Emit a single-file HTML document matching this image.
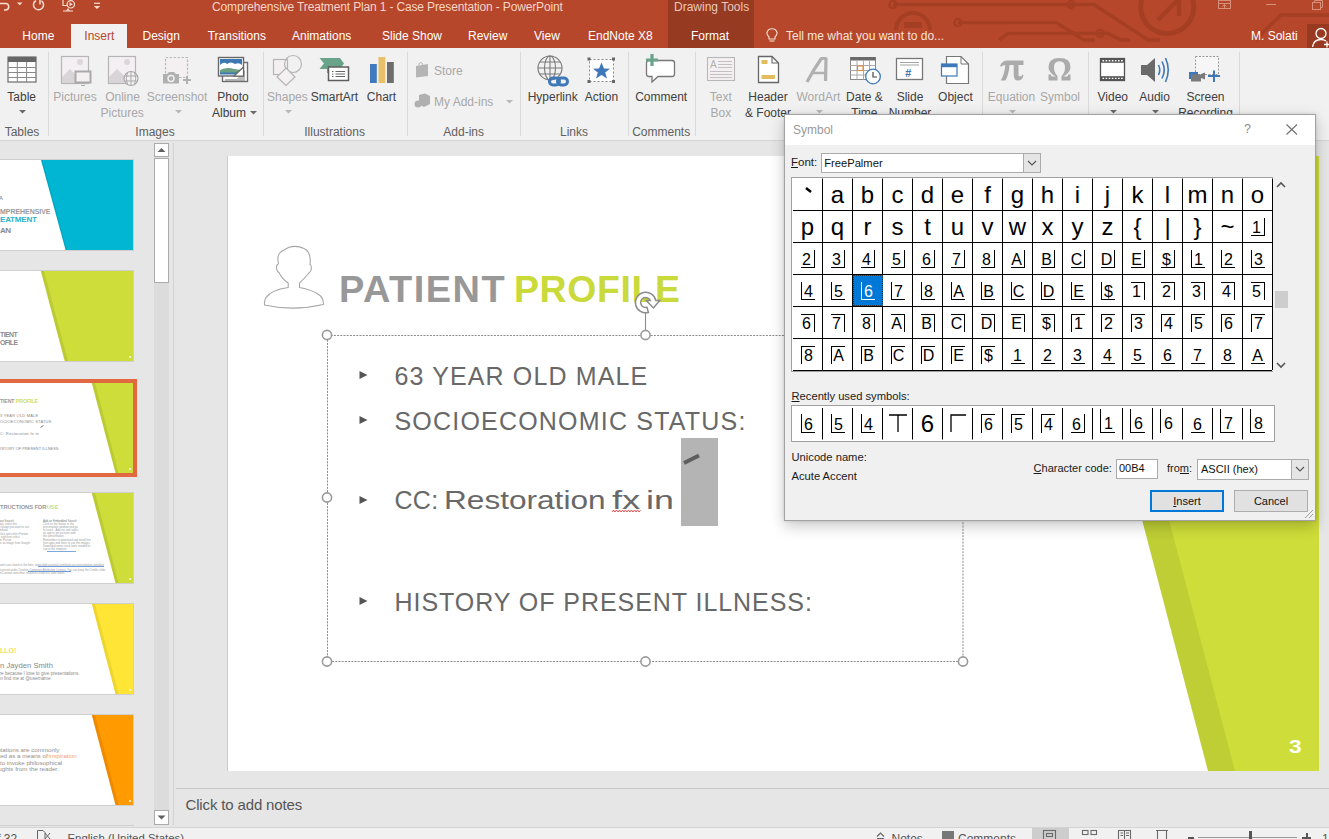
<!DOCTYPE html>
<html><head><meta charset="utf-8">
<style>
*{margin:0;padding:0;box-sizing:border-box}
html,body{width:1329px;height:839px;overflow:hidden;background:#E6E6E6;font-family:"Liberation Sans",sans-serif;position:relative}
.a{position:absolute;display:block}
.t{position:absolute;white-space:nowrap;line-height:1}
u{text-decoration:underline;text-underline-offset:1px}
</style></head><body>
<div class="a" style="left:0px;top:0px;width:1329px;height:48px;background:#B7472A;"></div>
<svg class="a" style="left:860px;top:0px;" width="469" height="48" viewBox="0 0 469 48">
<g fill="none" stroke="#A53F24" stroke-width="3.4" stroke-linejoin="round">
<path d="M33 4.5 H234 L288 40 H300"/>
<circle cx="33" cy="4.5" r="3.6" stroke-width="2.3"/>
<circle cx="211" cy="4.5" r="3.6" stroke-width="2.3"/>
<path d="M36 30 A17 17 0 0 1 70 30" stroke-width="4"/>
<path d="M98 22.6 H196.5 L223.6 40 H235"/>
<circle cx="98" cy="22.6" r="3.6" stroke-width="2.3"/>
<path d="M139 40 L148 33.4 H247.7 L261.3 40 H270"/>
<circle cx="240.2" cy="33.4" r="3.6" stroke-width="2.3"/>
<circle cx="307.2" cy="7" r="26.5" stroke-width="5"/>
<path d="M298 20 L318 0 M319 -2 V16" stroke-width="4.5"/>
<path d="M395 40 L421 15 H469"/>
</g>
<rect x="44" y="22" width="18" height="6" fill="#A53F24"/>
</svg>
<div class="a" style="left:668px;top:0px;width:86px;height:48px;background:#963A21;"></div>
<div class="t" style="top:1.14px;font-size:12px;color:#F6D5C8;left:212.00px;letter-spacing:-0.15px">Comprehensive Treatment Plan 1 - Case Presentation - PowerPoint</div>
<div class="t" style="top:1.14px;font-size:12px;color:#EDC7BA;left:674.00px;">Drawing Tools</div>
<svg class="a" style="left:0px;top:0px;" width="110" height="22" viewBox="0 0 110 22">
<g fill="none" stroke="#F7DDD3" stroke-width="1.5">
<path d="M0 3.6 H5.5 A3.2 3.2 0 0 1 5.5 10 H4"/>
<path d="M36 0.5 A5 5 0 1 0 41.5 0.8"/>
<path d="M40 -1 V4.5"/>
<path d="M63 0 V5.5 H67" stroke-width="1.2"/>
<circle cx="70.8" cy="4.3" r="3.7" stroke-width="1.2"/>
<path d="M63 11 H73 M66.5 11 L68 9 L69.5 11" stroke-width="1.1"/>
<path d="M94 3.3 H100" stroke-width="1.2"/>
</g>
<path d="M17 2.5 H22.5 L19.75 5.3Z" fill="#F7DDD3"/>
<path d="M69.5 2.3 L72.8 4.3 L69.5 6.3Z" fill="#F7DDD3"/>
<path d="M93.8 6 H100.2 L97 9Z" fill="#F7DDD3"/>
</svg>
<svg class="a" style="left:1210px;top:0px;" width="119" height="14" viewBox="0 0 119 14">
<g fill="none" stroke="#D9907A" stroke-width="1">
<rect x="8.5" y="0.5" width="12" height="8"/><path d="M8.5 3.5 H20.5 M14.5 8 V5 M12.5 6.5 L14.5 4.5 L16.5 6.5"/>
<path d="M56 4.5 H66"/>
<rect x="102.5" y="2.5" width="8" height="7"/><path d="M104.5 2.5 V0.5 H112.5 V7.5 H110.5"/>
</g></svg>
<div class="a" style="left:71px;top:24px;width:56px;height:24px;background:#F1F1F1;"></div>
<div class="t" style="top:30.44px;font-size:12px;color:#FFFFFF;left:22.30px;">Home</div>
<div class="t" style="top:30.44px;font-size:12px;color:#FFFFFF;left:142.50px;">Design</div>
<div class="t" style="top:30.44px;font-size:12px;color:#FFFFFF;left:207.70px;">Transitions</div>
<div class="t" style="top:30.44px;font-size:12px;color:#FFFFFF;left:292.00px;">Animations</div>
<div class="t" style="top:30.44px;font-size:12px;color:#FFFFFF;left:382.00px;">Slide Show</div>
<div class="t" style="top:30.44px;font-size:12px;color:#FFFFFF;left:468.00px;">Review</div>
<div class="t" style="top:30.44px;font-size:12px;color:#FFFFFF;left:534.00px;">View</div>
<div class="t" style="top:30.44px;font-size:12px;color:#FFFFFF;left:588.00px;">EndNote X8</div>
<div class="t" style="top:30.44px;font-size:12px;color:#FFFFFF;left:691.00px;">Format</div>
<div class="t" style="top:30.44px;font-size:12px;color:#B7472A;left:84.30px;">Insert</div>
<svg class="a" style="left:766px;top:28px;" width="12" height="16" viewBox="0 0 12 16"><g fill="none" stroke="#F7E0D7" stroke-width="1.1"><path d="M3 9 Q0.5 6.5 1 4.5 Q2 0.7 6 0.7 Q10 0.7 11 4.5 Q11.5 6.5 9 9 V11 H3Z"/><path d="M3.5 13 H8.5"/></g></svg>
<div class="t" style="top:30.44px;font-size:12px;color:#F7E3DB;left:786.00px;">Tell me what you want to do...</div>
<div class="t" style="top:30.44px;font-size:12px;color:#FFFFFF;left:1251.00px;">M. Solati</div>
<div class="a" style="left:1307px;top:24px;width:22px;height:24px;background:#973A21;"></div>
<svg class="a" style="left:1307px;top:24px;" width="22" height="24" viewBox="0 0 22 24"><g fill="none" stroke="#fff" stroke-width="1.3"><circle cx="14" cy="9.5" r="5"/><path d="M5.5 23 Q6.5 15.5 14 15.5 Q17 15.5 19 17"/><path d="M17 20.5 H23 M20 17.5 V23.5"/></g></svg>
<div class="a" style="left:0px;top:48px;width:1329px;height:92px;background:#F1F1F1;"></div>
<div class="a" style="left:0px;top:140px;width:1329px;height:1px;background:#D5D5D5;"></div>
<div class="a" style="left:48px;top:52px;width:1px;height:84px;background:#DADADA;"></div>
<div class="a" style="left:263px;top:52px;width:1px;height:84px;background:#DADADA;"></div>
<div class="a" style="left:407px;top:52px;width:1px;height:84px;background:#DADADA;"></div>
<div class="a" style="left:520px;top:52px;width:1px;height:84px;background:#DADADA;"></div>
<div class="a" style="left:628px;top:52px;width:1px;height:84px;background:#DADADA;"></div>
<div class="a" style="left:695px;top:52px;width:1px;height:84px;background:#DADADA;"></div>
<div class="a" style="left:982px;top:52px;width:1px;height:84px;background:#DADADA;"></div>
<div class="a" style="left:1088px;top:52px;width:1px;height:84px;background:#DADADA;"></div>
<div class="a" style="left:1239px;top:52px;width:1px;height:84px;background:#DADADA;"></div>
<div class="t" style="top:90.54px;font-size:12px;color:#404040;left:-378.30px;width:800px;text-align:center;">Table</div>
<svg class="a" style="left:18.5px;top:110px;" width="7" height="4" viewBox="0 0 7 4"><path d="M0 0 H7 L3.5 3.5Z" fill="#6a6a6a"/></svg>
<div class="t" style="top:90.54px;font-size:12px;color:#A8A8A8;left:-325.00px;width:800px;text-align:center;">Pictures</div>
<div class="t" style="top:90.54px;font-size:12px;color:#A8A8A8;left:-277.50px;width:800px;text-align:center;">Online</div>
<div class="t" style="top:107.34px;font-size:12px;color:#A8A8A8;left:-277.80px;width:800px;text-align:center;">Pictures</div>
<div class="t" style="top:90.54px;font-size:12px;color:#A8A8A8;left:-223.00px;width:800px;text-align:center;">Screenshot</div>
<svg class="a" style="left:174.5px;top:110px;" width="7" height="4" viewBox="0 0 7 4"><path d="M0 0 H7 L3.5 3.5Z" fill="#B8B8B8"/></svg>
<div class="t" style="top:90.54px;font-size:12px;color:#404040;left:-167.00px;width:800px;text-align:center;">Photo</div>
<div class="t" style="top:107.34px;font-size:12px;color:#404040;left:-171.00px;width:800px;text-align:center;">Album</div>
<svg class="a" style="left:249.5px;top:111px;" width="7" height="4" viewBox="0 0 7 4"><path d="M0 0 H7 L3.5 3.5Z" fill="#6a6a6a"/></svg>
<div class="t" style="top:90.54px;font-size:12px;color:#A8A8A8;left:-112.60px;width:800px;text-align:center;">Shapes</div>
<svg class="a" style="left:284.5px;top:110px;" width="7" height="4" viewBox="0 0 7 4"><path d="M0 0 H7 L3.5 3.5Z" fill="#B8B8B8"/></svg>
<div class="t" style="top:90.54px;font-size:12px;color:#404040;left:-65.50px;width:800px;text-align:center;">SmartArt</div>
<div class="t" style="top:90.54px;font-size:12px;color:#404040;left:-18.50px;width:800px;text-align:center;">Chart</div>
<div class="t" style="top:65.04px;font-size:12px;color:#A8A8A8;left:434.00px;">Store</div>
<div class="t" style="top:96.14px;font-size:12px;color:#A8A8A8;left:434.00px;">My Add-ins</div>
<svg class="a" style="left:505.5px;top:100px;" width="7" height="4" viewBox="0 0 7 4"><path d="M0 0 H7 L3.5 3.5Z" fill="#B8B8B8"/></svg>
<div class="t" style="top:90.54px;font-size:12px;color:#404040;left:152.70px;width:800px;text-align:center;">Hyperlink</div>
<div class="t" style="top:90.54px;font-size:12px;color:#404040;left:201.40px;width:800px;text-align:center;">Action</div>
<div class="t" style="top:90.54px;font-size:12px;color:#404040;left:261.20px;width:800px;text-align:center;">Comment</div>
<div class="t" style="top:90.54px;font-size:12px;color:#A8A8A8;left:320.80px;width:800px;text-align:center;">Text</div>
<div class="t" style="top:107.34px;font-size:12px;color:#A8A8A8;left:320.80px;width:800px;text-align:center;">Box</div>
<div class="t" style="top:90.54px;font-size:12px;color:#404040;left:368.00px;width:800px;text-align:center;">Header</div>
<div class="t" style="top:107.34px;font-size:12px;color:#404040;left:368.00px;width:800px;text-align:center;">&amp; Footer</div>
<div class="t" style="top:90.54px;font-size:12px;color:#A8A8A8;left:418.40px;width:800px;text-align:center;">WordArt</div>
<svg class="a" style="left:815.5px;top:110px;" width="7" height="4" viewBox="0 0 7 4"><path d="M0 0 H7 L3.5 3.5Z" fill="#B8B8B8"/></svg>
<div class="t" style="top:90.54px;font-size:12px;color:#404040;left:464.40px;width:800px;text-align:center;">Date &amp;</div>
<div class="t" style="top:107.34px;font-size:12px;color:#404040;left:464.40px;width:800px;text-align:center;">Time</div>
<div class="t" style="top:90.54px;font-size:12px;color:#404040;left:510.00px;width:800px;text-align:center;">Slide</div>
<div class="t" style="top:107.34px;font-size:12px;color:#404040;left:510.00px;width:800px;text-align:center;">Number</div>
<div class="t" style="top:90.54px;font-size:12px;color:#404040;left:555.40px;width:800px;text-align:center;">Object</div>
<div class="t" style="top:90.54px;font-size:12px;color:#A8A8A8;left:611.50px;width:800px;text-align:center;">Equation</div>
<svg class="a" style="left:1008.5px;top:110px;" width="7" height="4" viewBox="0 0 7 4"><path d="M0 0 H7 L3.5 3.5Z" fill="#B8B8B8"/></svg>
<div class="t" style="top:90.54px;font-size:12px;color:#A8A8A8;left:660.00px;width:800px;text-align:center;">Symbol</div>
<div class="t" style="top:90.54px;font-size:12px;color:#404040;left:712.80px;width:800px;text-align:center;">Video</div>
<svg class="a" style="left:1109.6px;top:110px;" width="7" height="4" viewBox="0 0 7 4"><path d="M0 0 H7 L3.5 3.5Z" fill="#6a6a6a"/></svg>
<div class="t" style="top:90.54px;font-size:12px;color:#404040;left:754.60px;width:800px;text-align:center;">Audio</div>
<svg class="a" style="left:1151.5px;top:110px;" width="7" height="4" viewBox="0 0 7 4"><path d="M0 0 H7 L3.5 3.5Z" fill="#6a6a6a"/></svg>
<div class="t" style="top:90.54px;font-size:12px;color:#404040;left:805.50px;width:800px;text-align:center;">Screen</div>
<div class="t" style="top:107.34px;font-size:12px;color:#404040;left:805.50px;width:800px;text-align:center;">Recording</div>
<div class="t" style="top:126.34px;font-size:12px;color:#606060;left:-378.00px;width:800px;text-align:center;">Tables</div>
<div class="t" style="top:126.34px;font-size:12px;color:#606060;left:-245.00px;width:800px;text-align:center;">Images</div>
<div class="t" style="top:126.34px;font-size:12px;color:#606060;left:-65.40px;width:800px;text-align:center;">Illustrations</div>
<div class="t" style="top:126.34px;font-size:12px;color:#606060;left:63.70px;width:800px;text-align:center;">Add-ins</div>
<div class="t" style="top:126.34px;font-size:12px;color:#606060;left:174.00px;width:800px;text-align:center;">Links</div>
<div class="t" style="top:126.34px;font-size:12px;color:#606060;left:261.20px;width:800px;text-align:center;">Comments</div>
<svg class="a" style="left:7px;top:56px;" width="30" height="27" viewBox="0 0 30 27"><rect x="1" y="1" width="28" height="25" fill="#fff" stroke="#777" stroke-width="1.3"/>
<rect x="1" y="1" width="28" height="5" fill="#666"/>
<path d="M1 11.5 H29 M1 16.5 H29 M1 21.5 H29 M10.3 6 V26 M19.6 6 V26" stroke="#888" stroke-width="1"/></svg>
<svg class="a" style="left:60px;top:55px;" width="34" height="32" viewBox="0 0 34 32"><rect x="1.5" y="1.5" width="27" height="27" fill="#F4EFF2" stroke="#B5B5B5" stroke-width="1.2"/>
<circle cx="20" cy="7" r="3" fill="#DCD6DA"/>
<path d="M2 28 V22 L10 14 L17 21 V28Z" fill="#D9D4D7"/>
<rect x="15.5" y="16.5" width="15" height="11" fill="#F4F0F2" stroke="#A9A9A9" stroke-width="2"/>
<path d="M21 30.5 H25" stroke="#aaa" stroke-width="1"/></svg>
<svg class="a" style="left:107px;top:55px;" width="34" height="33" viewBox="0 0 34 33"><rect x="1.5" y="1.5" width="27" height="27" fill="#F4EFF2" stroke="#B5B5B5" stroke-width="1.2"/>
<circle cx="20" cy="7" r="3" fill="#DCD6DA"/>
<path d="M2 28 V22 L10 14 L17 21 V28Z" fill="#D9D4D7"/>
<circle cx="24" cy="23.5" r="7" fill="#F4F0F2" stroke="#A9A9A9" stroke-width="1.2"/>
<path d="M17 21 H31 M17 26 H31 M24 16.5 V30.5 M20.5 17.5 Q18 23.5 20.5 29.5 M27.5 17.5 Q30 23.5 27.5 29.5" fill="none" stroke="#A9A9A9" stroke-width="1"/></svg>
<svg class="a" style="left:162px;top:56px;" width="31" height="29" viewBox="0 0 31 29"><rect x="3.5" y="1.5" width="22" height="20" fill="#F4F0F2" stroke="#BBB" stroke-width="1.2" stroke-dasharray="2.5 1.5"/>
<path d="M1 18 H5 L7 16 H12 L14 18 H17 V27.5 H1Z" fill="#B0B0B0"/>
<circle cx="9" cy="22.5" r="3" fill="none" stroke="#F1F1F1" stroke-width="1.4"/>
<path d="M21 24 H29 M25 20 V28" stroke="#B0B0B0" stroke-width="2"/></svg>
<svg class="a" style="left:217px;top:56px;" width="32" height="27" viewBox="0 0 32 27"><rect x="5.5" y="6.5" width="25" height="19" fill="#fff" stroke="#6F6F6F" stroke-width="1.4"/>
<path d="M8 24 H28" stroke="#999" stroke-width="1.5"/>
<path d="M19 24 L28 14 V24Z" fill="#BDBDBD"/>
<rect x="1.5" y="1.5" width="25" height="18.5" fill="#fff" stroke="#666" stroke-width="1.4"/>
<rect x="3" y="3" width="22" height="7" fill="#3E78B2"/>
<path d="M3 9 Q7 5 10 8 Q14 5 18 8 Q22 6 25 9 V13 H3Z" fill="#fff"/>
<path d="M3 14 Q10 10.5 17 13 L25 14 V17 H3Z" fill="#6BA083"/>
<path d="M3 16.5 H25 V18.5 H3Z" fill="#3E78B2"/>
<path d="M17 20 L26.5 11 V20Z" fill="#fff" stroke="#666" stroke-width="1.2"/></svg>
<svg class="a" style="left:271px;top:54px;" width="33" height="32" viewBox="0 0 33 32"><rect x="2.5" y="5.5" width="14" height="15" fill="#F4F0F2" stroke="#B5B5B5" stroke-width="1.2"/>
<circle cx="22" cy="10" r="8.5" fill="none" stroke="#B5B5B5" stroke-width="1.2"/>
<path d="M15 14 L24 23 L15 31.5 L6 23Z" fill="#F4F0F2" stroke="#B5B5B5" stroke-width="1.2"/></svg>
<svg class="a" style="left:319px;top:57px;" width="33" height="26" viewBox="0 0 33 26"><path d="M0.5 1 H21 L25 6.5 L21 12 V16 H8 V12 H0.5 L5 6.5Z" fill="#68A38A"/>
<rect x="9.5" y="10" width="20" height="13.5" fill="#fff" stroke="#5F5F5F" stroke-width="1.5"/>
<path d="M13 14.5 H14.5 M16.5 14.5 H26 M13 17 H14.5 M16.5 17 H26 M13 19.5 H14.5 M16.5 19.5 H26" stroke="#666" stroke-width="1"/></svg>
<svg class="a" style="left:369px;top:56px;" width="26" height="28" viewBox="0 0 26 28"><rect x="1" y="8" width="6.8" height="19" fill="#3F79C0"/>
<rect x="9.5" y="1" width="6.8" height="26" fill="#E8C06A"/>
<rect x="18" y="6" width="6.8" height="21" fill="#6D6D6D"/></svg>
<svg class="a" style="left:414px;top:61px;" width="18" height="18" viewBox="0 0 18 18"><path d="M2 5 L14 3 V15 L2 16.5Z" fill="#B5B5B5"/><path d="M5 4.5 V2.5 Q6.5 0.5 8.5 2.5 V4" fill="none" stroke="#B5B5B5" stroke-width="1"/></svg>
<svg class="a" style="left:414px;top:93px;" width="18" height="16" viewBox="0 0 18 16"><path d="M5 2 L11 0.5 L16 3 V11 L10 14 L5 11.5Z" fill="#B0B0B0"/><circle cx="4" cy="11" r="3.5" fill="#B0B0B0"/></svg>
<svg class="a" style="left:536px;top:55px;" width="36" height="33" viewBox="0 0 36 33"><g fill="none" stroke="#7A7A7A" stroke-width="1.1"><circle cx="14" cy="13" r="12"/><ellipse cx="14" cy="13" rx="5.5" ry="12"/><path d="M2 13 H26 M4 7 H24 M4 19 H24 M14 1 V25"/></g>
<g fill="none" stroke="#3E78B8" stroke-width="3"><rect x="13.5" y="23" width="10" height="7" rx="3.5"/><rect x="21.5" y="23" width="10" height="7" rx="3.5"/></g></svg>
<svg class="a" style="left:587px;top:57px;" width="30" height="27" viewBox="0 0 30 27"><rect x="2.5" y="2.5" width="24" height="22" fill="#fff" stroke="#888" stroke-width="1" stroke-dasharray="2 2"/>
<g fill="#666"><rect x="0.5" y="0.5" width="3" height="3"/><rect x="25" y="0.5" width="3" height="3"/><rect x="0.5" y="23" width="3" height="3"/><rect x="25" y="23" width="3" height="3"/></g>
<path d="M14.5 5.5 L17 11.5 L23 11.7 L18.2 15.5 L20 21.5 L14.5 18 L9 21.5 L10.8 15.5 L6 11.7 L12 11.5Z" fill="#3E78B8"/></svg>
<svg class="a" style="left:643px;top:53px;" width="34" height="31" viewBox="0 0 34 31"><path d="M6 7.5 H29 Q31.5 7.5 31.5 10 V21 Q31.5 23.5 29 23.5 H15 L9 29 V23.5 H6 Q3.5 23.5 3.5 21 V10 Q3.5 7.5 6 7.5Z" fill="#fff" stroke="#777" stroke-width="1.3"/>
<path d="M9 1 V13 M3 7 H15" stroke="#68A38A" stroke-width="3.2"/></svg>
<svg class="a" style="left:706px;top:56px;" width="30" height="27" viewBox="0 0 30 27"><rect x="1.5" y="1.5" width="27" height="23" fill="#F4F0F2" stroke="#B8B8B8" stroke-width="1.1"/>
<text x="4" y="12" font-family="Liberation Sans" font-size="10" fill="#B0B0B0">A</text>
<path d="M12 5.5 H26 M12 8.5 H26 M12 11.5 H26 M4 15.5 H26 M4 18.5 H26 M4 21.5 H26" stroke="#C5BFC3" stroke-width="1"/></svg>
<svg class="a" style="left:757px;top:55px;" width="24" height="30" viewBox="0 0 24 30"><path d="M1.5 1.5 H15 L21.5 8 V27.5 H1.5Z" fill="#fff" stroke="#666" stroke-width="1.3"/><path d="M15 1.5 V8 H21.5" fill="none" stroke="#666" stroke-width="1.1"/>
<rect x="4.5" y="5" width="6" height="4" fill="#E4BC5E"/><rect x="4.5" y="20" width="13.5" height="4" fill="#E4BC5E"/></svg>
<svg class="a" style="left:805px;top:57px;" width="25" height="27" viewBox="0 0 25 27"><path d="M2 25 Q9 12 16 2 Q19 0 21 2 L20.5 24" fill="none" stroke="#B0B0B0" stroke-width="3.2"/><path d="M7 16 H20" stroke="#B0B0B0" stroke-width="2.5"/></svg>
<svg class="a" style="left:849px;top:56px;" width="33" height="29" viewBox="0 0 33 29"><rect x="1.5" y="1.5" width="25" height="22" fill="#fff" stroke="#888" stroke-width="1"/>
<rect x="1.5" y="1" width="25" height="3.5" fill="#6A6A6A"/>
<path d="M1.5 9.5 H26.5 M1.5 14.5 H26.5 M1.5 19 H20 M8 4.5 V23.5 M14.5 4.5 V23.5 M20.5 4.5 V15" stroke="#AAA" stroke-width="1"/>
<rect x="8.5" y="10" width="5.5" height="4.5" fill="none" stroke="#E08B3C" stroke-width="1.1"/>
<circle cx="24" cy="20.5" r="7.3" fill="#fff" stroke="#3E78B8" stroke-width="1.3"/><path d="M24 16 V21 H28" fill="none" stroke="#444" stroke-width="1.2"/></svg>
<svg class="a" style="left:895px;top:57px;" width="30" height="25" viewBox="0 0 30 25"><rect x="1.5" y="1.5" width="26" height="21" fill="#fff" stroke="#777" stroke-width="1.3"/>
<path d="M5 5.5 H24 M5 8 H24" stroke="#999" stroke-width="0.9"/>
<text x="10" y="19.5" font-family="Liberation Sans" font-weight="bold" font-style="italic" font-size="11" fill="#3E78B8">#</text></svg>
<svg class="a" style="left:940px;top:55px;" width="31" height="30" viewBox="0 0 31 30"><path d="M6.5 1.5 H21 L28.5 9 V28.5 H6.5Z" fill="#fff" stroke="#777" stroke-width="1.2"/><path d="M21 1.5 V9 H28.5" fill="none" stroke="#777" stroke-width="1"/>
<rect x="1.5" y="9" width="15.5" height="12" fill="#fff" stroke="#3E78B8" stroke-width="1.2"/><rect x="1.5" y="9" width="15.5" height="3.2" fill="#3E78B8"/></svg>
<svg class="a" style="left:999px;top:58px;" width="26" height="24" viewBox="0 0 26 24"><path d="M1 8 Q3 2.5 8.5 2.5 H24.5 V7 H19.5 V16.5 Q19.5 18.5 21 18.5 Q22.7 18.5 23.3 16.5 L24.5 17.3 Q23.5 22.5 19 22.5 Q14.7 22.5 14.7 17 V7 H10.5 Q10 16 6.5 22.5 H1.8 Q6 15 6.3 7 Q3.5 7 2.3 8.8Z" fill="#ABABAB"/></svg>
<svg class="a" style="left:1047px;top:57px;" width="26" height="25" viewBox="0 0 26 25"><path d="M1.5 23.5 V17.5 H4 V18.5 Q4 19.5 5.5 19.5 H9 Q1.5 16 1.5 10 Q1.5 1 12.5 1 Q23.5 1 23.5 10 Q23.5 16 16 19.5 H19.5 Q21 19.5 21 18.5 V17.5 H23.5 V23.5 H14.5 V19 Q18 16 18 10.5 Q18 4.3 12.5 4.3 Q7 4.3 7 10.5 Q7 16 10.5 19 V23.5Z" fill="#ABABAB"/></svg>
<svg class="a" style="left:1099px;top:57px;" width="28" height="25" viewBox="0 0 28 25"><rect x="1.5" y="1.5" width="24" height="22" fill="#fff" stroke="#555" stroke-width="1.3"/>
<rect x="1.5" y="1.5" width="24" height="4.3" fill="#555"/><rect x="1.5" y="19.2" width="24" height="4.3" fill="#555"/>
<path d="M3.5 3.7 H24 M3.5 21.4 H24" stroke="#fff" stroke-width="1.4" stroke-dasharray="1.6 1.5"/></svg>
<svg class="a" style="left:1140px;top:56px;" width="30" height="28" viewBox="0 0 30 28"><path d="M1 9 H7 L15 2 V26 L7 19 H1Z" fill="#6A6A6A"/>
<path d="M18.5 9 Q21 14 18.5 19 M22 5.5 Q26.5 14 22 22.5 M25.5 2 Q31 14 25.5 26" fill="none" stroke="#3E78B8" stroke-width="1.6"/></svg>
<svg class="a" style="left:1188px;top:55px;" width="33" height="29" viewBox="0 0 33 29"><rect x="7.5" y="1.5" width="23" height="18" fill="#F6F6F6" stroke="#999" stroke-width="1" stroke-dasharray="2 1.5"/>
<rect x="1" y="17" width="9" height="7" fill="#3E78B8"/><rect x="3" y="19.5" width="10" height="7" fill="#7A7A7A"/>
<path d="M13 19 L17 17.5 V24.5 L13 23Z" fill="#7A7A7A"/>
<path d="M20 21 H32 M26 15.5 V27" stroke="#3E78B8" stroke-width="2"/></svg>
<div class="a" style="left:173px;top:143px;width:1px;height:682px;background:#D2D2D2;"></div>
<div class="a" style="left:154px;top:143px;width:15px;height:682px;background:#DCDCDC;"></div>
<div class="a" style="left:154px;top:143px;width:15px;height:14px;background:#FFFFFF;border:1px solid #ABABAB"></div>
<svg class="a" style="left:154px;top:143px;" width="15" height="14" viewBox="0 0 15 14"><path d="M3.5 9 H11.5 L7.5 5Z" fill="#606060"/></svg>
<div class="a" style="left:154px;top:158px;width:15px;height:125px;background:#FFFFFF;border:1px solid #ABABAB"></div>
<div class="a" style="left:154px;top:810px;width:15px;height:15px;background:#FFFFFF;border:1px solid #ABABAB"></div>
<svg class="a" style="left:154px;top:810px;" width="15" height="15" viewBox="0 0 15 15"><path d="M3.5 5.5 H11.5 L7.5 9.5Z" fill="#606060"/></svg>
<div class="a" style="left:-10px;top:159px;width:144px;height:92px;background:#CFCFCF;"></div>
<svg class="a" style="left:-27px;top:160px;" width="160" height="90" viewBox="0 0 160 90"><rect width="160" height="90" fill="#fff"/><path d="M68 0 H160 V90 H92.6Z" fill="#00A8C4"/><path d="M69.5 0 H160 V90 H94Z" fill="#00B6D2"/></svg>
<div class="a" style="left:-10px;top:270px;width:144px;height:92px;background:#CFCFCF;"></div>
<svg class="a" style="left:-27px;top:271px;" width="160" height="90" viewBox="0 0 160 90"><rect width="160" height="90" fill="#fff"/><path d="M67.8 0 H160 V90 H91.7Z" fill="#BCCB33"/><path d="M71 0 H160 V90 H95Z" fill="#CEDD39"/></svg>
<div class="a" style="left:129px;top:355.5px;width:2px;height:2.5px;background:#E9EEC8;"></div>
<div class="a" style="left:-10px;top:379px;width:147px;height:98px;background:#E2693F;"></div>
<svg class="a" style="left:-27px;top:383px;" width="160" height="90" viewBox="0 0 160 90"><rect width="160" height="90" fill="#fff"/><path d="M118.8 0 H160 V90 H142.5Z" fill="#BCCB33"/><path d="M122 0 H160 V90 H145.5Z" fill="#CEDD39"/></svg>
<div class="a" style="left:129px;top:467.5px;width:2px;height:2.5px;background:#E9EEC8;"></div>
<div class="a" style="left:-10px;top:492px;width:144px;height:92px;background:#CFCFCF;"></div>
<svg class="a" style="left:-27px;top:493px;" width="160" height="90" viewBox="0 0 160 90"><rect width="160" height="90" fill="#fff"/><path d="M118.8 0 H160 V90 H142.5Z" fill="#BCCB33"/><path d="M122 0 H160 V90 H145.5Z" fill="#CEDD39"/></svg>
<div class="a" style="left:129px;top:577.5px;width:2px;height:2.5px;background:#E9EEC8;"></div>
<div class="a" style="left:-10px;top:603px;width:144px;height:92px;background:#CFCFCF;"></div>
<svg class="a" style="left:-27px;top:604px;" width="160" height="90" viewBox="0 0 160 90"><rect width="160" height="90" fill="#fff"/><path d="M118.8 0 H160 V90 H142.5Z" fill="#EED62E"/><path d="M122 0 H160 V90 H145.5Z" fill="#FEE536"/></svg>
<div class="a" style="left:129px;top:688.5px;width:2px;height:2.5px;background:#E9EEC8;"></div>
<div class="a" style="left:-10px;top:714px;width:144px;height:92px;background:#CFCFCF;"></div>
<svg class="a" style="left:-27px;top:715px;" width="160" height="90" viewBox="0 0 160 90"><rect width="160" height="90" fill="#fff"/><path d="M118.8 0 H160 V90 H142.5Z" fill="#EE8A00"/><path d="M122 0 H160 V90 H145.5Z" fill="#FF9A00"/></svg>
<div class="a" style="left:129px;top:799.5px;width:2px;height:2.5px;background:#E9EEC8;"></div>
<div class="a" style="left:0px;top:825px;width:134px;height:1px;background:#CFCFCF;"></div>
<div class="t" style="top:196.04px;font-size:5.5px;color:#999;font-weight:bold;left:-1.00px;">A</div>
<div class="t" style="top:207.97px;font-size:7px;color:#9a9a9a;font-weight:bold;letter-spacing:-0.05px;left:0.00px;">MPREHENSIVE</div>
<div class="t" style="top:216.13px;font-size:8px;color:#2BB3CC;font-weight:bold;letter-spacing:-0.2px;left:0.00px;">EATMENT</div>
<div class="t" style="top:227.13px;font-size:8px;color:#8a8a8a;font-weight:bold;letter-spacing:-0.6px;left:0.00px;">AN</div>
<div class="t" style="top:330.87px;font-size:7px;color:#8d8d8d;font-weight:bold;letter-spacing:-0.6px;left:0.00px;">TIENT</div>
<div class="t" style="top:338.87px;font-size:7px;color:#8d8d8d;font-weight:bold;letter-spacing:-0.6px;left:0.00px;">OFILE</div>
<div class="t" style="top:399.41px;font-size:5.3px;color:#9a9a9a;font-weight:bold;letter-spacing:-0.2px;left:0.00px;">TIENT</div>
<div class="t" style="top:399.41px;font-size:5.3px;color:#CFDD5A;font-weight:bold;letter-spacing:-0.1px;left:15.80px;">PROFILE</div>
<div class="t" style="top:413.70px;font-size:3.9px;color:#858585;letter-spacing:0.25px;left:0.00px;">3 YEAR OLD MALE</div>
<div class="t" style="top:419.70px;font-size:3.9px;color:#858585;letter-spacing:0.22px;left:0.00px;">OCIOECONOMIC STATUS:</div>
<div class="t" style="top:431.70px;font-size:3.9px;color:#858585;letter-spacing:0.3px;left:0.00px;">C: Restoration fx in</div>
<div class="t" style="top:446.70px;font-size:3.9px;color:#858585;letter-spacing:0.05px;left:0.00px;">ISTORY OF PRESENT ILLNESS:</div>
<svg class="a" style="left:40px;top:425px;" width="4" height="3" viewBox="0 0 4 3"><path d="M0.5 2.5 L3.5 0.5" stroke="#777" stroke-width="1"/></svg>
<div class="t" style="top:505.29px;font-size:5.8px;color:#999;font-weight:bold;letter-spacing:-0.1px;left:0.00px;">TRUCTIONS FOR</div>
<div class="t" style="top:505.29px;font-size:5.8px;color:#D0DD6A;font-weight:bold;left:46.70px;">USE</div>
<div class="t" style="top:519.55px;font-size:2.9px;color:#777;left:-6.00px;">Without Search</div>
<div class="t" style="top:523.13px;font-size:2.8px;color:#9b9b9b;left:-8.00px;">In a slide, select the</div>
<div class="t" style="top:526.13px;font-size:2.8px;color:#9b9b9b;left:-8.00px;">picture/shape you want to use</div>
<div class="t" style="top:529.13px;font-size:2.8px;color:#9b9b9b;left:-8.00px;">as thumbnail</div>
<div class="t" style="top:532.63px;font-size:2.8px;color:#9b9b9b;left:-8.00px;">Right-click and select Format</div>
<div class="t" style="top:535.63px;font-size:2.8px;color:#9b9b9b;left:-8.00px;">Shape and then select</div>
<div class="t" style="top:538.63px;font-size:2.8px;color:#9b9b9b;left:-8.00px;">Fill from Picture</div>
<div class="t" style="top:542.13px;font-size:2.8px;color:#9b9b9b;left:-8.00px;">Choose an image from Google</div>
<div class="t" style="top:519.55px;font-size:2.9px;color:#777;left:43.00px;">Add an Embedded Search</div>
<div class="t" style="top:523.13px;font-size:2.8px;color:#9b9b9b;left:43.00px;">Click on the button in the</div>
<div class="t" style="top:526.13px;font-size:2.8px;color:#9b9b9b;left:43.00px;">presentation window and go</div>
<div class="t" style="top:529.13px;font-size:2.8px;color:#9b9b9b;left:43.00px;">to Insert - Add-ins and select</div>
<div class="t" style="top:532.13px;font-size:2.8px;color:#9b9b9b;left:43.00px;">an app to get pictures with</div>
<div class="t" style="top:535.13px;font-size:2.8px;color:#9b9b9b;left:43.00px;">this presentation</div>
<div class="t" style="top:538.63px;font-size:2.8px;color:#9b9b9b;left:43.00px;">Remember to download and install the</div>
<div class="t" style="top:541.63px;font-size:2.8px;color:#9b9b9b;left:43.00px;">free apps and fonts to use the images</div>
<div class="t" style="top:544.63px;font-size:2.8px;color:#9b9b9b;left:43.00px;">Download some stock fonts needed to</div>
<div class="t" style="top:547.63px;font-size:2.8px;color:#9b9b9b;left:43.00px;">use in the template</div>
<div class="a" style="left:47px;top:550.5px;width:29px;height:0.9px;background:#7FA7D9;"></div>
<div class="t" style="top:563.63px;font-size:2.8px;color:#9b9b9b;left:-696.00px;width:800px;text-align:right;">Use the fonts and icons found in the links: www.slidescarnival.com/help-use-presentation-template</div>
<div class="a" style="left:38px;top:566.3px;width:66px;height:0.9px;background:#6E9BD6;"></div>
<div class="t" style="top:568.63px;font-size:2.8px;color:#9b9b9b;left:-695.00px;width:800px;text-align:right;">This presentation is licensed under Creative Commons Attribution License. You can keep the Credits slide</div>
<div class="a" style="left:28px;top:571.3px;width:43px;height:0.9px;background:#6E9BD6;"></div>
<div class="t" style="top:571.63px;font-size:2.8px;color:#9b9b9b;left:-735.00px;width:800px;text-align:right;">or mention SlidesCarnival and other resources used in a slide footer.</div>
<div class="t" style="top:646.71px;font-size:7.2px;color:#F2E064;font-weight:bold;letter-spacing:-0.1px;left:0.00px;">LLO!</div>
<div class="t" style="top:661.77px;font-size:7.6px;color:#888;letter-spacing:0.05px;left:0.00px;">n Jayden Smith</div>
<div class="t" style="top:672.41px;font-size:4.6px;color:#8a8a8a;left:-720.50px;width:800px;text-align:right;">I am here because I love to give presentations.</div>
<div class="t" style="top:677.41px;font-size:4.6px;color:#8a8a8a;left:-749.50px;width:800px;text-align:right;">You can find me at @username</div>
<div class="t" style="top:746.55px;font-size:6.2px;color:#8f8f8f;left:-740.60px;width:800px;text-align:right;">Quotations are commonly</div>
<div class="t" style="top:753.15px;font-size:6.2px;color:#8f8f8f;left:-752.40px;width:800px;text-align:right;">printed as a means of</div>
<div class="t" style="top:753.15px;font-size:6.2px;color:#F4A27E;left:48.60px;">inspiration</div>
<div class="t" style="top:759.65px;font-size:6.2px;color:#8f8f8f;left:-737.80px;width:800px;text-align:right;">and to invoke philosophical</div>
<div class="t" style="top:766.05px;font-size:6.2px;color:#8f8f8f;left:-741.20px;width:800px;text-align:right;">thoughts from the reader.</div>
<svg class="a" style="left:227px;top:156px;" width="1092" height="615" viewBox="0 0 1092 615"><rect width="1092" height="615" fill="#fff"/>
<path d="M819.5 0 H1092 V615 H981 Z" fill="#BECE34"/>
<path d="M846.5 0 H1092 V615 H1008 Z" fill="#CEDD39"/>
</svg>
<div class="a" style="left:227px;top:156px;width:1px;height:615px;background:#C9C9C9;"></div>
<svg class="a" style="left:255px;top:238px;" width="80" height="77" viewBox="0 0 80 77"><path d="M33.2 45 V49.5 Q16 52 11 59.6 Q9 63 9.5 67 Q38.5 73.5 68.3 66.5 Q69 60 63 56 Q57 52 44.5 49.5 V45.1 Q50 40 53.7 35.3 Q57 33 56.3 29 Q56 26.5 55 26.6 Q56.5 14 49 10.5 Q42 7 34 9.2 Q31 11 27 13 Q22.5 16 22.9 21.1 L23.4 25.7 Q21 27 21.6 30.5 Q22 34 24 34.5 Q27 41 33.2 45 Z" fill="#fff" stroke="#A5A5A5" stroke-width="1.05"/></svg>
<div class="t" style="top:272.03px;font-size:36px;color:#989898;font-weight:bold;letter-spacing:1.4px;left:339.00px;transform:scaleX(1.055);transform-origin:0 0">PATIENT</div>
<div class="t" style="top:272.03px;font-size:36px;color:#C9DA3A;font-weight:bold;letter-spacing:0.6px;left:514.00px;transform:scaleX(1.04);transform-origin:0 0">PROFILE</div>
<svg class="a" style="left:320px;top:285px;" width="650" height="384" viewBox="0 0 650 384"><g transform="translate(0,10)"><g fill="none" stroke="#8C8C8C" stroke-width="1" stroke-dasharray="2 1.2">
<rect x="7.5" y="40.5" width="635.5" height="326"/>
</g>
<path d="M325.5 18 V35" stroke="#8C8C8C" stroke-width="1.1"/>
<g fill="#fff" stroke="#9a9a9a" stroke-width="1.6">
<circle cx="7" cy="40" r="4.6"/><circle cx="325.5" cy="40" r="4.6"/><circle cx="643" cy="40" r="4.6"/>
<circle cx="7" cy="202.5" r="4.6"/><circle cx="643" cy="202.5" r="4.6"/>
<circle cx="7" cy="366.5" r="4.6"/><circle cx="325.5" cy="366.5" r="4.6"/><circle cx="643" cy="366.5" r="4.6"/>
</g>
<path d="M328.37 17.45 A10.3 10.3 0 1 1 335.8 5.5 L339.8 5.5 L333.4 13 L326.3 5.5 L330.28 5.5 A5 5 0 1 0 326.99 12.33 Z" fill="#fff" stroke="#8C8C8C" stroke-width="1.5" stroke-linejoin="miter"/>
</g></svg>
<svg class="a" style="left:358px;top:369.8px;" width="11" height="10" viewBox="0 0 11 10"><path d="M1.5 1 L9.5 5 L1.5 9Z" fill="#555"/></svg>
<svg class="a" style="left:358px;top:414.8px;" width="11" height="10" viewBox="0 0 11 10"><path d="M1.5 1 L9.5 5 L1.5 9Z" fill="#555"/></svg>
<svg class="a" style="left:358px;top:494.5px;" width="11" height="10" viewBox="0 0 11 10"><path d="M1.5 1 L9.5 5 L1.5 9Z" fill="#555"/></svg>
<svg class="a" style="left:358px;top:595.5px;" width="11" height="10" viewBox="0 0 11 10"><path d="M1.5 1 L9.5 5 L1.5 9Z" fill="#555"/></svg>
<div class="t" style="top:363.54px;font-size:25px;color:#686868;letter-spacing:1.13px;left:394.50px;">63 YEAR OLD MALE</div>
<div class="t" style="top:408.84px;font-size:25px;color:#686868;letter-spacing:1.2px;left:394.50px;">SOCIOECONOMIC STATUS:</div>
<div class="t" style="top:488.34px;font-size:25px;color:#686868;letter-spacing:0.3px;left:394.50px;">CC:</div>
<div class="t" style="top:487.49px;font-size:26px;color:#686868;left:444.30px;transform:scaleX(1.215);transform-origin:0 0">Restoration</div>
<div class="t" style="top:487.49px;font-size:26px;color:#686868;left:611.50px;transform:scaleX(1.4);transform-origin:0 0">fx</div>
<div class="t" style="top:487.49px;font-size:26px;color:#686868;left:645.50px;transform:scaleX(1.38);transform-origin:0 0">in</div>
<div class="t" style="top:589.64px;font-size:25px;color:#686868;letter-spacing:0.95px;left:394.50px;">HISTORY OF PRESENT ILLNESS:</div>
<div class="a" style="left:681px;top:438px;width:37px;height:88px;background:#B4B4B4;"></div>
<svg class="a" style="left:681px;top:438px;" width="37" height="88" viewBox="0 0 37 88"><path d="M3 25 L18 17.5" stroke="#5E5E5E" stroke-width="4"/></svg>
<svg class="a" style="left:612px;top:509px;" width="30" height="5" viewBox="0 0 30 5"><path d="M0 3 L1.5 1 L3 3 L4.5 1 L6 3 L7.5 1 L9 3 L10.5 1 L12 3 L13.5 1 L15 3 L16.5 1 L18 3 L19.5 1 L21 3 L22.5 1 L24 3 L25.5 1 L27 3 L28.5 1" fill="none" stroke="#E04040" stroke-width="0.9"/></svg>
<div class="t" style="top:736.52px;font-size:19px;color:#FFFFFF;font-weight:bold;letter-spacing:0px;left:1288.50px;transform:scaleX(1.2);transform-origin:0 0">3</div>
<div class="a" style="left:176px;top:788px;width:1153px;height:1px;background:#C6C6C6;"></div>
<div class="t" style="top:796.80px;font-size:15px;color:#555555;letter-spacing:-0.15px;left:185.50px;">Click to add notes</div>
<div class="a" style="left:0px;top:827px;width:1329px;height:12px;background:#F1F1F1;"></div>
<div class="a" style="left:0px;top:826.5px;width:1329px;height:1px;background:#D4D4D4;"></div>
<div class="t" style="top:832.84px;font-size:12px;color:#555;left:-9.50px;">of 32</div>
<svg class="a" style="left:36px;top:829px;" width="16" height="12" viewBox="0 0 16 12"><g fill="none" stroke="#666" stroke-width="1"><path d="M1.5 11 V1.5 H7 L9 3.5 V11"/><path d="M9 4 L14 10 M14 4 L9 10"/></g></svg>
<div class="t" style="top:833.35px;font-size:11.4px;color:#555;left:67.50px;">English (United States)</div>
<svg class="a" style="left:876px;top:829px;" width="10" height="10" viewBox="0 0 10 10"><path d="M1 7.5 L4.5 4 L8 7.5" fill="none" stroke="#666" stroke-width="1.2"/><path d="M1 9.5 H8" stroke="#666"/></svg>
<div class="t" style="top:832.84px;font-size:12px;color:#555;left:891.50px;">Notes</div>
<div class="a" style="left:942px;top:831px;width:12px;height:9px;background:#777;"></div>
<div class="t" style="top:832.84px;font-size:12px;color:#555;left:958.00px;">Comments</div>
<div class="a" style="left:1032px;top:827.5px;width:37px;height:12px;background:#CDCDCD;"></div>
<svg class="a" style="left:1040px;top:829px;" width="130" height="10" viewBox="0 0 130 10"><g fill="none" stroke="#6a6a6a" stroke-width="1.1">
<rect x="3.5" y="1.5" width="12" height="10"/><rect x="6.5" y="4.5" width="6" height="3"/>
<rect x="42.5" y="1.5" width="5.5" height="4"/><rect x="51" y="1.5" width="5.5" height="4"/>
<rect x="78.5" y="1.5" width="12" height="10"/><path d="M84.5 1.5 V11 M80.5 4 H83 M86 4 H89 M80.5 6.5 H83 M86 6.5 H89"/>
<path d="M116 1.5 H128 M117.5 1.5 V11 M126.5 1.5 V11"/>
</g></svg>
<div class="a" style="left:1188px;top:837px;width:6px;height:2px;background:#555;"></div>
<div class="a" style="left:1198px;top:837px;width:99px;height:1px;background:#999;"></div>
<div class="a" style="left:1249px;top:831px;width:3px;height:9px;background:#555;"></div>
<div class="a" style="left:1302px;top:836.5px;width:9px;height:2px;background:#555;"></div>
<div class="a" style="left:1305.5px;top:833px;width:2px;height:7px;background:#555;"></div>
<div class="t" style="top:832.84px;font-size:12px;color:#555;left:1322.00px;">1</div>
<div class="a" style="left:784px;top:114px;width:532px;height:407px;background:#F0F0F0;border:1px solid #A2A2A2;box-shadow:0 5px 14px rgba(0,0,0,0.22),0 0 3px rgba(0,0,0,0.12)"></div>
<div class="a" style="left:785px;top:115px;width:530px;height:30px;background:#FFFFFF;"></div>
<div class="t" style="top:124.04px;font-size:12px;color:#999999;left:793.00px;">Symbol</div>
<div class="t" style="top:123.22px;font-size:12.5px;color:#8a8a8a;left:1244.00px;">?</div>
<svg class="a" style="left:1286px;top:124px;" width="12" height="11" viewBox="0 0 12 11"><path d="M0.5 0.5 L11 10.5 M11 0.5 L0.5 10.5" stroke="#707070" stroke-width="1.1"/></svg>
<div class="t" style="top:157.27px;font-size:11.5px;color:#1a1a1a;left:791.00px;"><u>F</u>ont:</div>
<div class="a" style="left:821px;top:153px;width:220px;height:20px;background:#FFFFFF;border:1px solid #ABABAB"></div>
<div class="a" style="left:1023px;top:154px;width:17px;height:18px;background:#E5E5E5;border-left:1px solid #ABABAB"></div>
<svg class="a" style="left:1026px;top:158px;" width="12" height="9" viewBox="0 0 12 9"><path d="M2 3 L6 7 L10 3" fill="none" stroke="#555" stroke-width="1.1"/></svg>
<div class="t" style="top:157.52px;font-size:11.2px;color:#111;left:824.20px;">FreePalmer</div>
<div class="a" style="left:791px;top:177px;width:482px;height:195px;background:#FFFFFF;border:1px solid #A0A0A0;border-right:none"></div>
<svg class="a" style="left:791px;top:177px;" width="482" height="195" viewBox="0 0 482 195"><g stroke="#000" stroke-width="1" fill="none"><path d="M31.5 1.5 V193" /><path d="M61.5 1.5 V193" /><path d="M91.5 1.5 V193" /><path d="M121.5 1.5 V193" /><path d="M151.5 1.5 V193" /><path d="M181.5 1.5 V193" /><path d="M211.5 1.5 V193" /><path d="M241.5 1.5 V193" /><path d="M271.5 1.5 V193" /><path d="M301.5 1.5 V193" /><path d="M331.5 1.5 V193" /><path d="M361.5 1.5 V193" /><path d="M391.5 1.5 V193" /><path d="M421.5 1.5 V193" /><path d="M451.5 1.5 V193" /><path d="M481.5 1.5 V193" /><path d="M2 33.5 H481" /><path d="M2 65.5 H481" /><path d="M2 97.5 H481" /><path d="M2 129.5 H481" /><path d="M2 161.5 H481" /><path d="M2 193.5 H481" /></g></svg>
<div class="a" style="left:853px;top:275px;width:30px;height:31px;background:#0078D7;outline:1px dotted #333;outline-offset:-1px"></div>
<svg class="a" style="left:804.5px;top:186.5px;" width="8" height="7" viewBox="0 0 8 7"><path d="M1 1 L6 5" stroke="#000" stroke-width="2.4"/></svg>
<div class="t" style="top:182.68px;font-size:24px;color:#000;left:437.50px;width:800px;text-align:center;">a</div>
<div class="t" style="top:182.68px;font-size:24px;color:#000;left:467.50px;width:800px;text-align:center;">b</div>
<div class="t" style="top:182.68px;font-size:24px;color:#000;left:497.50px;width:800px;text-align:center;">c</div>
<div class="t" style="top:182.68px;font-size:24px;color:#000;left:527.50px;width:800px;text-align:center;">d</div>
<div class="t" style="top:182.68px;font-size:24px;color:#000;left:557.50px;width:800px;text-align:center;">e</div>
<div class="t" style="top:182.68px;font-size:24px;color:#000;left:587.50px;width:800px;text-align:center;">f</div>
<div class="t" style="top:182.68px;font-size:24px;color:#000;left:617.50px;width:800px;text-align:center;">g</div>
<div class="t" style="top:182.68px;font-size:24px;color:#000;left:647.50px;width:800px;text-align:center;">h</div>
<div class="t" style="top:182.68px;font-size:24px;color:#000;left:677.50px;width:800px;text-align:center;">i</div>
<div class="t" style="top:182.68px;font-size:24px;color:#000;left:707.50px;width:800px;text-align:center;">j</div>
<div class="t" style="top:182.68px;font-size:24px;color:#000;left:737.50px;width:800px;text-align:center;">k</div>
<div class="t" style="top:182.68px;font-size:24px;color:#000;left:767.50px;width:800px;text-align:center;">l</div>
<div class="t" style="top:182.68px;font-size:24px;color:#000;left:797.50px;width:800px;text-align:center;">m</div>
<div class="t" style="top:182.68px;font-size:24px;color:#000;left:827.50px;width:800px;text-align:center;">n</div>
<div class="t" style="top:182.68px;font-size:24px;color:#000;left:857.50px;width:800px;text-align:center;">o</div>
<div class="t" style="top:214.68px;font-size:24px;color:#000;left:407.50px;width:800px;text-align:center;">p</div>
<div class="t" style="top:214.68px;font-size:24px;color:#000;left:437.50px;width:800px;text-align:center;">q</div>
<div class="t" style="top:214.68px;font-size:24px;color:#000;left:467.50px;width:800px;text-align:center;">r</div>
<div class="t" style="top:214.68px;font-size:24px;color:#000;left:497.50px;width:800px;text-align:center;">s</div>
<div class="t" style="top:214.68px;font-size:24px;color:#000;left:527.50px;width:800px;text-align:center;">t</div>
<div class="t" style="top:214.68px;font-size:24px;color:#000;left:557.50px;width:800px;text-align:center;">u</div>
<div class="t" style="top:214.68px;font-size:24px;color:#000;left:587.50px;width:800px;text-align:center;">v</div>
<div class="t" style="top:214.68px;font-size:24px;color:#000;left:617.50px;width:800px;text-align:center;">w</div>
<div class="t" style="top:214.68px;font-size:24px;color:#000;left:647.50px;width:800px;text-align:center;">x</div>
<div class="t" style="top:214.68px;font-size:24px;color:#000;left:677.50px;width:800px;text-align:center;">y</div>
<div class="t" style="top:214.68px;font-size:24px;color:#000;left:707.50px;width:800px;text-align:center;">z</div>
<div class="t" style="top:214.68px;font-size:24px;color:#000;left:737.50px;width:800px;text-align:center;">{</div>
<div class="t" style="top:214.68px;font-size:24px;color:#000;left:767.50px;width:800px;text-align:center;">|</div>
<div class="t" style="top:214.68px;font-size:24px;color:#000;left:797.50px;width:800px;text-align:center;">}</div>
<div class="t" style="top:214.68px;font-size:24px;color:#000;left:827.50px;width:800px;text-align:center;">~</div>
<div class="a" style="left:1250.5px;top:217.5px;width:14px;height:18px;border-bottom:1.5px solid #000;border-right:1.5px solid #000;"></div>
<div class="t" style="top:220.16px;font-size:16px;color:#000;left:856.50px;width:800px;text-align:center;">1</div>
<div class="a" style="left:800.5px;top:249.5px;width:14px;height:18px;border-bottom:1.5px solid #000;border-right:1.5px solid #000;"></div>
<div class="t" style="top:252.16px;font-size:16px;color:#000;left:406.50px;width:800px;text-align:center;">2</div>
<div class="a" style="left:830.5px;top:249.5px;width:14px;height:18px;border-bottom:1.5px solid #000;border-right:1.5px solid #000;"></div>
<div class="t" style="top:252.16px;font-size:16px;color:#000;left:436.50px;width:800px;text-align:center;">3</div>
<div class="a" style="left:860.5px;top:249.5px;width:14px;height:18px;border-bottom:1.5px solid #000;border-right:1.5px solid #000;"></div>
<div class="t" style="top:252.16px;font-size:16px;color:#000;left:466.50px;width:800px;text-align:center;">4</div>
<div class="a" style="left:890.5px;top:249.5px;width:14px;height:18px;border-bottom:1.5px solid #000;border-right:1.5px solid #000;"></div>
<div class="t" style="top:252.16px;font-size:16px;color:#000;left:496.50px;width:800px;text-align:center;">5</div>
<div class="a" style="left:920.5px;top:249.5px;width:14px;height:18px;border-bottom:1.5px solid #000;border-right:1.5px solid #000;"></div>
<div class="t" style="top:252.16px;font-size:16px;color:#000;left:526.50px;width:800px;text-align:center;">6</div>
<div class="a" style="left:950.5px;top:249.5px;width:14px;height:18px;border-bottom:1.5px solid #000;border-right:1.5px solid #000;"></div>
<div class="t" style="top:252.16px;font-size:16px;color:#000;left:556.50px;width:800px;text-align:center;">7</div>
<div class="a" style="left:980.5px;top:249.5px;width:14px;height:18px;border-bottom:1.5px solid #000;border-right:1.5px solid #000;"></div>
<div class="t" style="top:252.16px;font-size:16px;color:#000;left:586.50px;width:800px;text-align:center;">8</div>
<div class="a" style="left:1010.5px;top:249.5px;width:14px;height:18px;border-bottom:1.5px solid #000;border-right:1.5px solid #000;"></div>
<div class="t" style="top:252.16px;font-size:16px;color:#000;left:616.50px;width:800px;text-align:center;">A</div>
<div class="a" style="left:1040.5px;top:249.5px;width:14px;height:18px;border-bottom:1.5px solid #000;border-right:1.5px solid #000;"></div>
<div class="t" style="top:252.16px;font-size:16px;color:#000;left:646.50px;width:800px;text-align:center;">B</div>
<div class="a" style="left:1070.5px;top:249.5px;width:14px;height:18px;border-bottom:1.5px solid #000;border-right:1.5px solid #000;"></div>
<div class="t" style="top:252.16px;font-size:16px;color:#000;left:676.50px;width:800px;text-align:center;">C</div>
<div class="a" style="left:1100.5px;top:249.5px;width:14px;height:18px;border-bottom:1.5px solid #000;border-right:1.5px solid #000;"></div>
<div class="t" style="top:252.16px;font-size:16px;color:#000;left:706.50px;width:800px;text-align:center;">D</div>
<div class="a" style="left:1130.5px;top:249.5px;width:14px;height:18px;border-bottom:1.5px solid #000;border-right:1.5px solid #000;"></div>
<div class="t" style="top:252.16px;font-size:16px;color:#000;left:736.50px;width:800px;text-align:center;">E</div>
<div class="a" style="left:1160.5px;top:249.5px;width:14px;height:18px;border-bottom:1.5px solid #000;border-right:1.5px solid #000;"></div>
<div class="t" style="top:252.16px;font-size:16px;color:#000;left:766.50px;width:800px;text-align:center;">$</div>
<div class="a" style="left:1190.5px;top:249.5px;width:14px;height:18px;border-bottom:1.5px solid #000;border-left:1.5px solid #000;"></div>
<div class="t" style="top:252.16px;font-size:16px;color:#000;left:798.50px;width:800px;text-align:center;">1</div>
<div class="a" style="left:1220.5px;top:249.5px;width:14px;height:18px;border-bottom:1.5px solid #000;border-left:1.5px solid #000;"></div>
<div class="t" style="top:252.16px;font-size:16px;color:#000;left:828.50px;width:800px;text-align:center;">2</div>
<div class="a" style="left:1250.5px;top:249.5px;width:14px;height:18px;border-bottom:1.5px solid #000;border-left:1.5px solid #000;"></div>
<div class="t" style="top:252.16px;font-size:16px;color:#000;left:858.50px;width:800px;text-align:center;">3</div>
<div class="a" style="left:800.5px;top:281.5px;width:14px;height:18px;border-bottom:1.5px solid #000;border-left:1.5px solid #000;"></div>
<div class="t" style="top:284.16px;font-size:16px;color:#000;left:408.50px;width:800px;text-align:center;">4</div>
<div class="a" style="left:830.5px;top:281.5px;width:14px;height:18px;border-bottom:1.5px solid #000;border-left:1.5px solid #000;"></div>
<div class="t" style="top:284.16px;font-size:16px;color:#000;left:438.50px;width:800px;text-align:center;">5</div>
<div class="a" style="left:860.5px;top:281.5px;width:14px;height:18px;border-bottom:1.5px solid #FFFFFF;border-left:1.5px solid #FFFFFF;"></div>
<div class="t" style="top:284.16px;font-size:16px;color:#FFFFFF;left:468.50px;width:800px;text-align:center;">6</div>
<div class="a" style="left:890.5px;top:281.5px;width:14px;height:18px;border-bottom:1.5px solid #000;border-left:1.5px solid #000;"></div>
<div class="t" style="top:284.16px;font-size:16px;color:#000;left:498.50px;width:800px;text-align:center;">7</div>
<div class="a" style="left:920.5px;top:281.5px;width:14px;height:18px;border-bottom:1.5px solid #000;border-left:1.5px solid #000;"></div>
<div class="t" style="top:284.16px;font-size:16px;color:#000;left:528.50px;width:800px;text-align:center;">8</div>
<div class="a" style="left:950.5px;top:281.5px;width:14px;height:18px;border-bottom:1.5px solid #000;border-left:1.5px solid #000;"></div>
<div class="t" style="top:284.16px;font-size:16px;color:#000;left:558.50px;width:800px;text-align:center;">A</div>
<div class="a" style="left:980.5px;top:281.5px;width:14px;height:18px;border-bottom:1.5px solid #000;border-left:1.5px solid #000;"></div>
<div class="t" style="top:284.16px;font-size:16px;color:#000;left:588.50px;width:800px;text-align:center;">B</div>
<div class="a" style="left:1010.5px;top:281.5px;width:14px;height:18px;border-bottom:1.5px solid #000;border-left:1.5px solid #000;"></div>
<div class="t" style="top:284.16px;font-size:16px;color:#000;left:618.50px;width:800px;text-align:center;">C</div>
<div class="a" style="left:1040.5px;top:281.5px;width:14px;height:18px;border-bottom:1.5px solid #000;border-left:1.5px solid #000;"></div>
<div class="t" style="top:284.16px;font-size:16px;color:#000;left:648.50px;width:800px;text-align:center;">D</div>
<div class="a" style="left:1070.5px;top:281.5px;width:14px;height:18px;border-bottom:1.5px solid #000;border-left:1.5px solid #000;"></div>
<div class="t" style="top:284.16px;font-size:16px;color:#000;left:678.50px;width:800px;text-align:center;">E</div>
<div class="a" style="left:1100.5px;top:281.5px;width:14px;height:18px;border-bottom:1.5px solid #000;border-left:1.5px solid #000;"></div>
<div class="t" style="top:284.16px;font-size:16px;color:#000;left:708.50px;width:800px;text-align:center;">$</div>
<div class="a" style="left:1130.5px;top:281.5px;width:14px;height:18px;border-top:1.5px solid #000;border-right:1.5px solid #000;"></div>
<div class="t" style="top:284.16px;font-size:16px;color:#000;left:736.50px;width:800px;text-align:center;">1</div>
<div class="a" style="left:1160.5px;top:281.5px;width:14px;height:18px;border-top:1.5px solid #000;border-right:1.5px solid #000;"></div>
<div class="t" style="top:284.16px;font-size:16px;color:#000;left:766.50px;width:800px;text-align:center;">2</div>
<div class="a" style="left:1190.5px;top:281.5px;width:14px;height:18px;border-top:1.5px solid #000;border-right:1.5px solid #000;"></div>
<div class="t" style="top:284.16px;font-size:16px;color:#000;left:796.50px;width:800px;text-align:center;">3</div>
<div class="a" style="left:1220.5px;top:281.5px;width:14px;height:18px;border-top:1.5px solid #000;border-right:1.5px solid #000;"></div>
<div class="t" style="top:284.16px;font-size:16px;color:#000;left:826.50px;width:800px;text-align:center;">4</div>
<div class="a" style="left:1250.5px;top:281.5px;width:14px;height:18px;border-top:1.5px solid #000;border-right:1.5px solid #000;"></div>
<div class="t" style="top:284.16px;font-size:16px;color:#000;left:856.50px;width:800px;text-align:center;">5</div>
<div class="a" style="left:800.5px;top:313.5px;width:14px;height:18px;border-top:1.5px solid #000;border-right:1.5px solid #000;"></div>
<div class="t" style="top:316.16px;font-size:16px;color:#000;left:406.50px;width:800px;text-align:center;">6</div>
<div class="a" style="left:830.5px;top:313.5px;width:14px;height:18px;border-top:1.5px solid #000;border-right:1.5px solid #000;"></div>
<div class="t" style="top:316.16px;font-size:16px;color:#000;left:436.50px;width:800px;text-align:center;">7</div>
<div class="a" style="left:860.5px;top:313.5px;width:14px;height:18px;border-top:1.5px solid #000;border-right:1.5px solid #000;"></div>
<div class="t" style="top:316.16px;font-size:16px;color:#000;left:466.50px;width:800px;text-align:center;">8</div>
<div class="a" style="left:890.5px;top:313.5px;width:14px;height:18px;border-top:1.5px solid #000;border-right:1.5px solid #000;"></div>
<div class="t" style="top:316.16px;font-size:16px;color:#000;left:496.50px;width:800px;text-align:center;">A</div>
<div class="a" style="left:920.5px;top:313.5px;width:14px;height:18px;border-top:1.5px solid #000;border-right:1.5px solid #000;"></div>
<div class="t" style="top:316.16px;font-size:16px;color:#000;left:526.50px;width:800px;text-align:center;">B</div>
<div class="a" style="left:950.5px;top:313.5px;width:14px;height:18px;border-top:1.5px solid #000;border-right:1.5px solid #000;"></div>
<div class="t" style="top:316.16px;font-size:16px;color:#000;left:556.50px;width:800px;text-align:center;">C</div>
<div class="a" style="left:980.5px;top:313.5px;width:14px;height:18px;border-top:1.5px solid #000;border-right:1.5px solid #000;"></div>
<div class="t" style="top:316.16px;font-size:16px;color:#000;left:586.50px;width:800px;text-align:center;">D</div>
<div class="a" style="left:1010.5px;top:313.5px;width:14px;height:18px;border-top:1.5px solid #000;border-right:1.5px solid #000;"></div>
<div class="t" style="top:316.16px;font-size:16px;color:#000;left:616.50px;width:800px;text-align:center;">E</div>
<div class="a" style="left:1040.5px;top:313.5px;width:14px;height:18px;border-top:1.5px solid #000;border-right:1.5px solid #000;"></div>
<div class="t" style="top:316.16px;font-size:16px;color:#000;left:646.50px;width:800px;text-align:center;">$</div>
<div class="a" style="left:1070.5px;top:313.5px;width:14px;height:18px;border-top:1.5px solid #000;border-left:1.5px solid #000;"></div>
<div class="t" style="top:316.16px;font-size:16px;color:#000;left:678.50px;width:800px;text-align:center;">1</div>
<div class="a" style="left:1100.5px;top:313.5px;width:14px;height:18px;border-top:1.5px solid #000;border-left:1.5px solid #000;"></div>
<div class="t" style="top:316.16px;font-size:16px;color:#000;left:708.50px;width:800px;text-align:center;">2</div>
<div class="a" style="left:1130.5px;top:313.5px;width:14px;height:18px;border-top:1.5px solid #000;border-left:1.5px solid #000;"></div>
<div class="t" style="top:316.16px;font-size:16px;color:#000;left:738.50px;width:800px;text-align:center;">3</div>
<div class="a" style="left:1160.5px;top:313.5px;width:14px;height:18px;border-top:1.5px solid #000;border-left:1.5px solid #000;"></div>
<div class="t" style="top:316.16px;font-size:16px;color:#000;left:768.50px;width:800px;text-align:center;">4</div>
<div class="a" style="left:1190.5px;top:313.5px;width:14px;height:18px;border-top:1.5px solid #000;border-left:1.5px solid #000;"></div>
<div class="t" style="top:316.16px;font-size:16px;color:#000;left:798.50px;width:800px;text-align:center;">5</div>
<div class="a" style="left:1220.5px;top:313.5px;width:14px;height:18px;border-top:1.5px solid #000;border-left:1.5px solid #000;"></div>
<div class="t" style="top:316.16px;font-size:16px;color:#000;left:828.50px;width:800px;text-align:center;">6</div>
<div class="a" style="left:1250.5px;top:313.5px;width:14px;height:18px;border-top:1.5px solid #000;border-left:1.5px solid #000;"></div>
<div class="t" style="top:316.16px;font-size:16px;color:#000;left:858.50px;width:800px;text-align:center;">7</div>
<div class="a" style="left:800.5px;top:345.5px;width:14px;height:18px;border-top:1.5px solid #000;border-left:1.5px solid #000;"></div>
<div class="t" style="top:348.16px;font-size:16px;color:#000;left:408.50px;width:800px;text-align:center;">8</div>
<div class="a" style="left:830.5px;top:345.5px;width:14px;height:18px;border-top:1.5px solid #000;border-left:1.5px solid #000;"></div>
<div class="t" style="top:348.16px;font-size:16px;color:#000;left:438.50px;width:800px;text-align:center;">A</div>
<div class="a" style="left:860.5px;top:345.5px;width:14px;height:18px;border-top:1.5px solid #000;border-left:1.5px solid #000;"></div>
<div class="t" style="top:348.16px;font-size:16px;color:#000;left:468.50px;width:800px;text-align:center;">B</div>
<div class="a" style="left:890.5px;top:345.5px;width:14px;height:18px;border-top:1.5px solid #000;border-left:1.5px solid #000;"></div>
<div class="t" style="top:348.16px;font-size:16px;color:#000;left:498.50px;width:800px;text-align:center;">C</div>
<div class="a" style="left:920.5px;top:345.5px;width:14px;height:18px;border-top:1.5px solid #000;border-left:1.5px solid #000;"></div>
<div class="t" style="top:348.16px;font-size:16px;color:#000;left:528.50px;width:800px;text-align:center;">D</div>
<div class="a" style="left:950.5px;top:345.5px;width:14px;height:18px;border-top:1.5px solid #000;border-left:1.5px solid #000;"></div>
<div class="t" style="top:348.16px;font-size:16px;color:#000;left:558.50px;width:800px;text-align:center;">E</div>
<div class="a" style="left:980.5px;top:345.5px;width:14px;height:18px;border-top:1.5px solid #000;border-left:1.5px solid #000;"></div>
<div class="t" style="top:348.16px;font-size:16px;color:#000;left:588.50px;width:800px;text-align:center;">$</div>
<div class="a" style="left:1010.5px;top:345.5px;width:14px;height:18px;border-bottom:1.5px solid #000;"></div>
<div class="t" style="top:348.16px;font-size:16px;color:#000;left:617.50px;width:800px;text-align:center;">1</div>
<div class="a" style="left:1040.5px;top:345.5px;width:14px;height:18px;border-bottom:1.5px solid #000;"></div>
<div class="t" style="top:348.16px;font-size:16px;color:#000;left:647.50px;width:800px;text-align:center;">2</div>
<div class="a" style="left:1070.5px;top:345.5px;width:14px;height:18px;border-bottom:1.5px solid #000;"></div>
<div class="t" style="top:348.16px;font-size:16px;color:#000;left:677.50px;width:800px;text-align:center;">3</div>
<div class="a" style="left:1100.5px;top:345.5px;width:14px;height:18px;border-bottom:1.5px solid #000;"></div>
<div class="t" style="top:348.16px;font-size:16px;color:#000;left:707.50px;width:800px;text-align:center;">4</div>
<div class="a" style="left:1130.5px;top:345.5px;width:14px;height:18px;border-bottom:1.5px solid #000;"></div>
<div class="t" style="top:348.16px;font-size:16px;color:#000;left:737.50px;width:800px;text-align:center;">5</div>
<div class="a" style="left:1160.5px;top:345.5px;width:14px;height:18px;border-bottom:1.5px solid #000;"></div>
<div class="t" style="top:348.16px;font-size:16px;color:#000;left:767.50px;width:800px;text-align:center;">6</div>
<div class="a" style="left:1190.5px;top:345.5px;width:14px;height:18px;border-bottom:1.5px solid #000;"></div>
<div class="t" style="top:348.16px;font-size:16px;color:#000;left:797.50px;width:800px;text-align:center;">7</div>
<div class="a" style="left:1220.5px;top:345.5px;width:14px;height:18px;border-bottom:1.5px solid #000;"></div>
<div class="t" style="top:348.16px;font-size:16px;color:#000;left:827.50px;width:800px;text-align:center;">8</div>
<div class="a" style="left:1250.5px;top:345.5px;width:14px;height:18px;border-bottom:1.5px solid #000;"></div>
<div class="t" style="top:348.16px;font-size:16px;color:#000;left:857.50px;width:800px;text-align:center;">A</div>
<svg class="a" style="left:1274px;top:180px;" width="14" height="10" viewBox="0 0 14 10"><path d="M3 7 L7 3 L11 7" fill="none" stroke="#555" stroke-width="1.6"/></svg>
<div class="a" style="left:1275px;top:291px;width:13px;height:17px;background:#CDCDCD;"></div>
<svg class="a" style="left:1274px;top:360px;" width="14" height="10" viewBox="0 0 14 10"><path d="M3 3 L7 7 L11 3" fill="none" stroke="#555" stroke-width="1.6"/></svg>
<div class="t" style="top:391.02px;font-size:11.2px;color:#1a1a1a;left:791.50px;"><u>R</u>ecently used symbols:</div>
<div class="a" style="left:791px;top:405px;width:484px;height:37px;background:#FFFFFF;border:1px solid #A0A0A0"></div>
<svg class="a" style="left:791px;top:405px;" width="484" height="37" viewBox="0 0 484 37"><g stroke="#000" stroke-width="1"><path d="M31.5 3 V34.5"/><path d="M61.5 3 V34.5"/><path d="M91.5 3 V34.5"/><path d="M121.5 3 V34.5"/><path d="M151.5 3 V34.5"/><path d="M181.5 3 V34.5"/><path d="M211.5 3 V34.5"/><path d="M241.5 3 V34.5"/><path d="M271.5 3 V34.5"/><path d="M301.5 3 V34.5"/><path d="M331.5 3 V34.5"/><path d="M361.5 3 V34.5"/><path d="M391.5 3 V34.5"/><path d="M421.5 3 V34.5"/><path d="M451.5 3 V34.5"/></g></svg>
<div class="a" style="left:800.5px;top:414.2px;width:14px;height:18.6px;border-bottom:1.5px solid #000;border-left:1.5px solid #000;"></div>
<div class="t" style="top:416.86px;font-size:16px;color:#000;left:408.50px;width:800px;text-align:center;">6</div>
<div class="a" style="left:830.5px;top:414.2px;width:14px;height:18.6px;border-bottom:1.5px solid #000;border-left:1.5px solid #000;"></div>
<div class="t" style="top:416.86px;font-size:16px;color:#000;left:438.50px;width:800px;text-align:center;">5</div>
<div class="a" style="left:860.5px;top:414.2px;width:14px;height:18.6px;border-bottom:1.5px solid #000;border-left:1.5px solid #000;"></div>
<div class="t" style="top:416.86px;font-size:16px;color:#000;left:468.50px;width:800px;text-align:center;">4</div>
<svg class="a" style="left:882.5px;top:406px;" width="30" height="36" viewBox="0 0 30 36"><path d="M6 9 H24 M15 9 V26" stroke="#000" stroke-width="1.3" fill="none"/></svg>
<div class="t" style="top:412.08px;font-size:24px;color:#000;left:527.50px;width:800px;text-align:center;">6</div>
<svg class="a" style="left:942.5px;top:406px;" width="30" height="36" viewBox="0 0 30 36"><path d="M8 26 V9 H23" stroke="#000" stroke-width="1.3" fill="none"/></svg>
<div class="a" style="left:980.5px;top:414.2px;width:14px;height:18.6px;border-top:1.5px solid #000;border-left:1.5px solid #000;"></div>
<div class="t" style="top:416.86px;font-size:16px;color:#000;left:588.50px;width:800px;text-align:center;">6</div>
<div class="a" style="left:1010.5px;top:414.2px;width:14px;height:18.6px;border-top:1.5px solid #000;border-left:1.5px solid #000;"></div>
<div class="t" style="top:416.86px;font-size:16px;color:#000;left:618.50px;width:800px;text-align:center;">5</div>
<div class="a" style="left:1040.5px;top:414.2px;width:14px;height:18.6px;border-top:1.5px solid #000;border-left:1.5px solid #000;"></div>
<div class="t" style="top:416.86px;font-size:16px;color:#000;left:648.50px;width:800px;text-align:center;">4</div>
<div class="a" style="left:1070.5px;top:414.2px;width:14px;height:18.6px;border-bottom:1.5px solid #000;border-right:1.5px solid #000;"></div>
<div class="t" style="top:416.86px;font-size:16px;color:#000;left:676.50px;width:800px;text-align:center;">6</div>
<div class="a" style="left:1100.0px;top:409px;width:15px;height:24px;border-bottom:1.5px solid #000;border-left:1.5px solid #000;"></div>
<div class="t" style="top:416.46px;font-size:16px;color:#000;left:708.50px;width:800px;text-align:center;">1</div>
<div class="a" style="left:1130.0px;top:409px;width:15px;height:24px;border-bottom:1.5px solid #000;border-left:1.5px solid #000;"></div>
<div class="t" style="top:416.46px;font-size:16px;color:#000;left:738.50px;width:800px;text-align:center;">6</div>
<div class="a" style="left:1160.0px;top:409px;width:15px;height:24px;border-left:1.5px solid #000;"></div>
<div class="t" style="top:416.46px;font-size:16px;color:#000;left:768.50px;width:800px;text-align:center;">6</div>
<div class="a" style="left:1190.5px;top:414.2px;width:14px;height:18.6px;border-bottom:1.5px solid #000;"></div>
<div class="t" style="top:416.86px;font-size:16px;color:#000;left:797.50px;width:800px;text-align:center;">6</div>
<div class="a" style="left:1220.0px;top:409px;width:15px;height:24px;border-bottom:1.5px solid #000;border-left:1.5px solid #000;"></div>
<div class="t" style="top:416.46px;font-size:16px;color:#000;left:828.50px;width:800px;text-align:center;">7</div>
<div class="a" style="left:1250.0px;top:409px;width:15px;height:24px;border-bottom:1.5px solid #000;border-left:1.5px solid #000;"></div>
<div class="t" style="top:416.46px;font-size:16px;color:#000;left:858.50px;width:800px;text-align:center;">8</div>
<div class="t" style="top:452.02px;font-size:11.2px;color:#1a1a1a;left:791.50px;">Unicode name:</div>
<div class="t" style="top:470.52px;font-size:11.2px;color:#1a1a1a;left:791.50px;">Acute Accent</div>
<div class="t" style="top:463.39px;font-size:11px;color:#1a1a1a;left:1033.60px;"><u>C</u>haracter code:</div>
<div class="a" style="left:1116px;top:459px;width:42px;height:20px;background:#FFFFFF;border:1px solid #ABABAB"></div>
<div class="t" style="top:463.39px;font-size:11px;color:#111;left:1119.00px;">00B4</div>
<div class="t" style="top:463.39px;font-size:11px;color:#1a1a1a;left:1167.00px;">fro<u>m</u>:</div>
<div class="a" style="left:1197px;top:458.5px;width:112px;height:21.5px;background:#FFFFFF;border:1px solid #ABABAB"></div>
<div class="a" style="left:1291px;top:459.5px;width:17px;height:19.5px;background:#E5E5E5;border-left:1px solid #ABABAB"></div>
<svg class="a" style="left:1294px;top:464px;" width="12" height="9" viewBox="0 0 12 9"><path d="M2 3 L6 7 L10 3" fill="none" stroke="#555" stroke-width="1.1"/></svg>
<div class="t" style="top:464.19px;font-size:11px;color:#111;left:1201.00px;">ASCII (hex)</div>
<div class="a" style="left:1150px;top:490px;width:74px;height:22px;background:#E1E1E1;border:2px solid #0078D7"></div>
<div class="t" style="top:495.69px;font-size:11px;color:#111;left:787.00px;width:800px;text-align:center;"><u>I</u>nsert</div>
<div class="a" style="left:1234px;top:490px;width:74px;height:22px;background:#E1E1E1;border:1px solid #ADADAD"></div>
<div class="t" style="top:495.69px;font-size:11px;color:#111;left:871.00px;width:800px;text-align:center;">Cancel</div>
<svg class="a" style="left:1302px;top:507px;" width="12" height="12" viewBox="0 0 12 12"><path d="M11 3 L3 11 M11 7 L7 11" stroke="#A0A0A0" stroke-width="1"/></svg>
</body></html>
